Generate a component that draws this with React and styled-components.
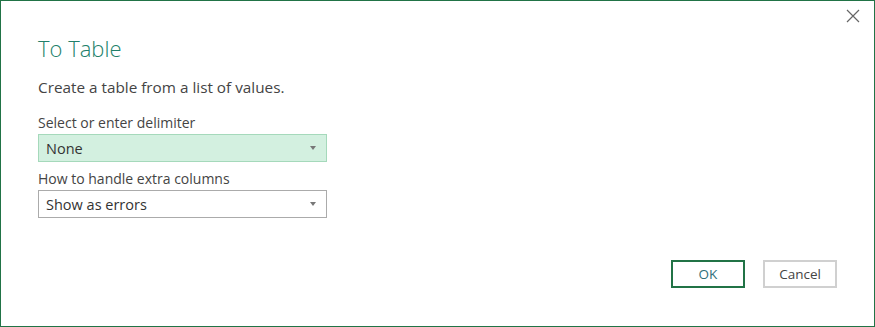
import React from 'react';
import styled, { createGlobalStyle } from 'styled-components';

const Global = createGlobalStyle`
  html, body { margin: 0; padding: 0; background: #fff; }
  body { font-family: "Open Sans", "Liberation Sans", sans-serif; color: #444; }
`;

const Dialog = styled.div`
  box-sizing: border-box;
  width: 875px;
  height: 327px;
  border: 1px solid #217346;
  background: #fff;
  position: relative;
  padding: 33px 37px 0 37px;
  display: flex;
  flex-direction: column;
`;

const Close = styled.button`
  position: absolute;
  top: 6px;
  right: 12px;
  width: 18px;
  height: 18px;
  padding: 0;
  border: 0;
  background: none;
  display: flex;
  align-items: center;
  justify-content: center;
`;

const Title = styled.h1`
  margin: 0;
  font-weight: 300;
  font-size: 22px;
  line-height: 28px;
  color: #217f6a;
`;

const Description = styled.p`
  margin: 15px 0 0;
  font-size: 15.3px;
  line-height: 20px;
  color: #444;
`;

const Label = styled.div`
  margin-top: ${p => p.$top}px;
  font-size: 14px;
  line-height: 20px;
  color: #444;
`;

const Select = styled.div`
  box-sizing: border-box;
  width: 289px;
  height: 28px;
  margin-top: 1px;
  padding: 0 10px 0 7px;
  display: flex;
  align-items: center;
  justify-content: space-between;
  font-size: 14.5px;
  color: #333;
  background: ${p => (p.$active ? '#d3f0e0' : '#fff')};
  border: 1px solid ${p => (p.$active ? '#a5d9bb' : '#ababab')};
`;

const Caret = styled.span`
  width: 0;
  height: 0;
  border-left: 3.5px solid transparent;
  border-right: 3.5px solid transparent;
  border-top: 4px solid #777;
`;

const Footer = styled.div`
  margin-top: auto;
  margin-bottom: 38px;
  display: flex;
  justify-content: flex-end;
  gap: 18px;
`;

const Button = styled.button`
  box-sizing: border-box;
  width: 74px;
  height: 28px;
  padding: 0;
  font-family: inherit;
  font-size: 13.5px;
  color: ${p => (p.$primary ? '#2f6f7a' : '#444')};
  background: #fff;
  border: 2px solid ${p => (p.$primary ? '#217346' : '#d0d0d0')};
`;

export default function App() {
  return (
    <>
      <Global />
      <Dialog>
        <Close aria-label="Close">
          <svg width="14" height="14" viewBox="0 0 14 14">
            <path d="M1 1L13 13M13 1L1 13" stroke="#666" strokeWidth="1.2" fill="none" />
          </svg>
        </Close>
        <Title>To Table</Title>
        <Description>Create a table from a list of values.</Description>
        <Label $top={16}>Select or enter delimiter</Label>
        <Select $active>
          <span>None</span>
          <Caret />
        </Select>
        <Label $top={7}>How to handle extra columns</Label>
        <Select>
          <span>Show as errors</span>
          <Caret />
        </Select>
        <Footer>
          <Button $primary>OK</Button>
          <Button>Cancel</Button>
        </Footer>
      </Dialog>
    </>
  );
}
